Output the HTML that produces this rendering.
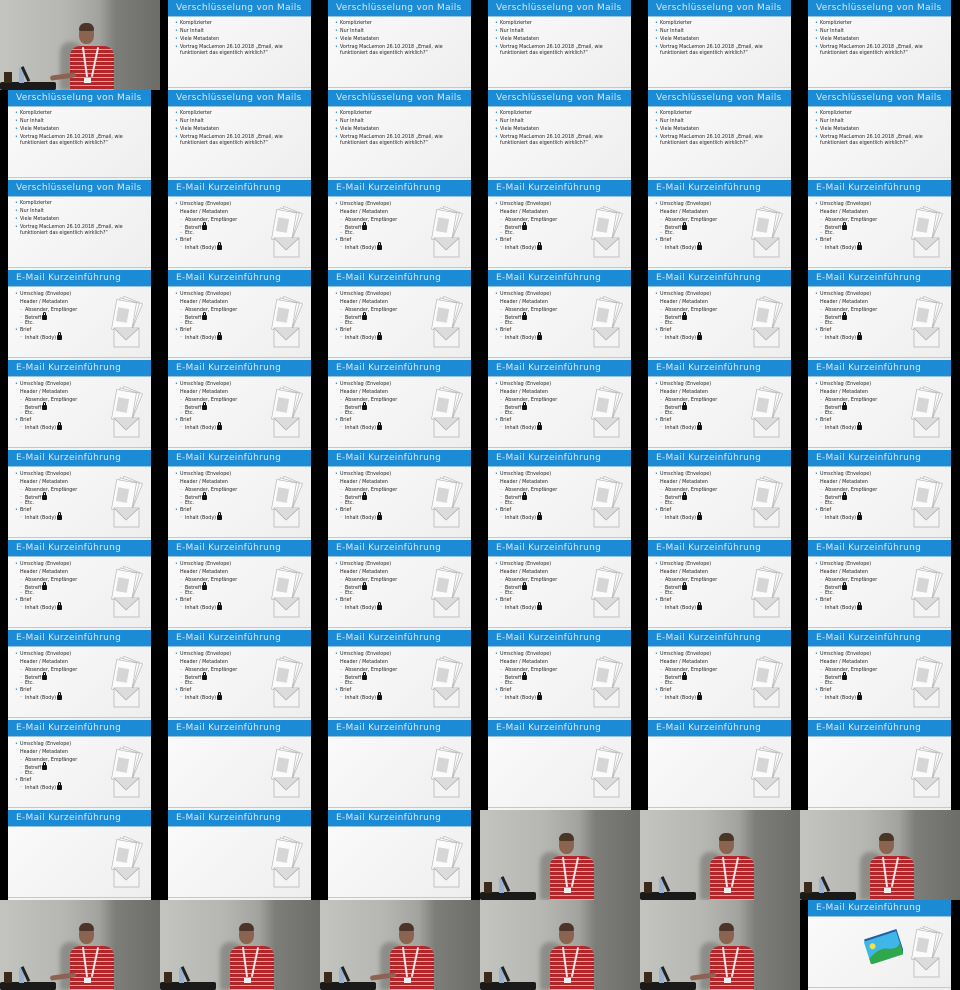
<!DOCTYPE html>
<html><head><meta charset="utf-8">
<style>
*{margin:0;padding:0;box-sizing:border-box}
body{width:960px;height:990px;background:#000;overflow:hidden;font-family:"DejaVu Sans","Liberation Sans",sans-serif}
#g{display:grid;grid-template-columns:repeat(6,160px);grid-auto-rows:90px;width:960px}
.t{position:relative;width:160px;height:90px;overflow:hidden;background:#000}
.s{position:absolute;left:8px;top:0;width:143px;height:90px;background:linear-gradient(135deg,#fbfbfb,#eeeeee)}
.s::after{content:"";position:absolute;left:0;right:0;bottom:2px;height:1px;background:#c8c8c8}
.h{position:absolute;left:0;top:0;width:143px;height:17px;background:#1c8bd6;border-bottom:1px solid #9ac3e0;color:#d5e9f7;font-size:9px;line-height:17px;padding-left:8px;white-space:nowrap;letter-spacing:0.3px}
.l{position:absolute;font-size:4.8px;color:#222;white-space:nowrap;line-height:6px;height:6px}
.b::before{content:"•";color:#1c8bd6;position:absolute;left:-5px}
.d::before{content:"–";color:#999;position:absolute;left:-5px}
.lk{display:inline-block;width:5px;height:5px;background:#111;border-radius:1px;position:relative;vertical-align:-1px;margin-left:1px}
.lk::before{content:"";position:absolute;left:1px;top:-3px;width:3px;height:4px;border:1px solid #111;border-bottom:none;border-radius:2px 2px 0 0;box-sizing:border-box}
.ic{position:absolute;left:96px;top:24px;width:40px;height:56px}
.p{position:absolute;inset:0;background:linear-gradient(90deg,#c3c3bf 0%,#b6b6b2 40%,#a2a29e 62%,#7d7d79 72%,#6c6c68 100%)}
.sh{position:absolute;left:60px;top:42px;width:22px;height:48px;background:#8c8c88;border-radius:10px 10px 0 0;filter:blur(2px)}
.hd{position:absolute;left:79px;top:25px;width:15px;height:19px;background:#8a6450;border-radius:45%}
.hr{position:absolute;left:79px;top:23px;width:15px;height:8px;background:#4a3526;border-radius:8px 8px 2px 2px}
.sr{position:absolute;left:70px;top:46px;width:44px;height:46px;background:repeating-linear-gradient(180deg,#b3272b 0 3px,#d8a8a8 3px 4px);border-radius:10px 10px 0 0}
.ly{position:absolute;left:84px;top:47px;width:2px;height:30px;background:#e8e8e8;transform:rotate(-8deg)}
.ly2{position:absolute;left:94px;top:47px;width:2px;height:30px;background:#e8e8e8;transform:rotate(12deg)}
.bd{position:absolute;left:84px;top:78px;width:7px;height:5px;background:#eee}
.dk{position:absolute;left:0;top:82px;width:56px;height:8px;background:#1a1a1a;border-radius:2px}
.bo{position:absolute;left:19px;top:68px;width:5px;height:15px;background:#9ab0d0}
.ob{position:absolute;left:4px;top:72px;width:8px;height:11px;background:#3a2a1a}
.lp{position:absolute;left:24px;top:66px;width:3px;height:16px;background:#222;transform:rotate(-25deg)}
.arm{position:absolute;left:50px;top:74px;width:26px;height:5px;background:#8a6450;border-radius:3px;transform:rotate(-8deg)}
</style></head><body>
<svg width="0" height="0" style="position:absolute"><defs><symbol id="env" viewBox="0 0 40 56"><g fill="#fbfbfb" stroke="#b8b8b8" stroke-width=".7"><rect x="14" y="5" width="20" height="28" transform="rotate(22 24 19)"/><rect x="12" y="6" width="20" height="28" transform="rotate(16 22 20)"/><rect x="10" y="7" width="20" height="30" transform="rotate(10 20 22)"/></g><rect x="13" y="14" width="11" height="14" fill="#d6d6d6" transform="rotate(10 18 21)"/><path d="M10 34 L35 34 L35 53 L10 53 Z" fill="#f4f4f4" stroke="#b0b0b0" stroke-width=".7"/><path d="M10 34 L22 46 L35 34" fill="#dcdcdc" stroke="#a8a8a8" stroke-width=".7"/></symbol></defs></svg>
<div id="g">
<!-- row 0 -->
<div class="t"><div class="p"></div><div class="sh"></div><div class="sr"></div><div class="ly"></div><div class="ly2"></div><div class="bd"></div><div class="hd"></div><div class="hr"></div><div class="arm"></div><div class="dk"></div><div class="ob"></div><div class="bo"></div><div class="lp"></div></div>
<div class="t"><div class="s"><div class="h">Verschlüsselung von Mails</div><div class="l b" style="left:12px;top:21px">Komplizierter</div><div class="l b" style="left:12px;top:29px">Nur Inhalt</div><div class="l b" style="left:12px;top:37px">Viele Metadaten</div><div class="l b" style="left:12px;top:45px;height:12px">Vortrag MacLemon 26.10.2018 „Email, wie<br>funktioniert das eigentlich wirklich?“</div></div></div>
<div class="t"><div class="s"><div class="h">Verschlüsselung von Mails</div><div class="l b" style="left:12px;top:21px">Komplizierter</div><div class="l b" style="left:12px;top:29px">Nur Inhalt</div><div class="l b" style="left:12px;top:37px">Viele Metadaten</div><div class="l b" style="left:12px;top:45px;height:12px">Vortrag MacLemon 26.10.2018 „Email, wie<br>funktioniert das eigentlich wirklich?“</div></div></div>
<div class="t"><div class="s"><div class="h">Verschlüsselung von Mails</div><div class="l b" style="left:12px;top:21px">Komplizierter</div><div class="l b" style="left:12px;top:29px">Nur Inhalt</div><div class="l b" style="left:12px;top:37px">Viele Metadaten</div><div class="l b" style="left:12px;top:45px;height:12px">Vortrag MacLemon 26.10.2018 „Email, wie<br>funktioniert das eigentlich wirklich?“</div></div></div>
<div class="t"><div class="s"><div class="h">Verschlüsselung von Mails</div><div class="l b" style="left:12px;top:21px">Komplizierter</div><div class="l b" style="left:12px;top:29px">Nur Inhalt</div><div class="l b" style="left:12px;top:37px">Viele Metadaten</div><div class="l b" style="left:12px;top:45px;height:12px">Vortrag MacLemon 26.10.2018 „Email, wie<br>funktioniert das eigentlich wirklich?“</div></div></div>
<div class="t"><div class="s"><div class="h">Verschlüsselung von Mails</div><div class="l b" style="left:12px;top:21px">Komplizierter</div><div class="l b" style="left:12px;top:29px">Nur Inhalt</div><div class="l b" style="left:12px;top:37px">Viele Metadaten</div><div class="l b" style="left:12px;top:45px;height:12px">Vortrag MacLemon 26.10.2018 „Email, wie<br>funktioniert das eigentlich wirklich?“</div></div></div>
<!-- row 1 -->
<div class="t"><div class="s"><div class="h">Verschlüsselung von Mails</div><div class="l b" style="left:12px;top:21px">Komplizierter</div><div class="l b" style="left:12px;top:29px">Nur Inhalt</div><div class="l b" style="left:12px;top:37px">Viele Metadaten</div><div class="l b" style="left:12px;top:45px;height:12px">Vortrag MacLemon 26.10.2018 „Email, wie<br>funktioniert das eigentlich wirklich?“</div></div></div>
<div class="t"><div class="s"><div class="h">Verschlüsselung von Mails</div><div class="l b" style="left:12px;top:21px">Komplizierter</div><div class="l b" style="left:12px;top:29px">Nur Inhalt</div><div class="l b" style="left:12px;top:37px">Viele Metadaten</div><div class="l b" style="left:12px;top:45px;height:12px">Vortrag MacLemon 26.10.2018 „Email, wie<br>funktioniert das eigentlich wirklich?“</div></div></div>
<div class="t"><div class="s"><div class="h">Verschlüsselung von Mails</div><div class="l b" style="left:12px;top:21px">Komplizierter</div><div class="l b" style="left:12px;top:29px">Nur Inhalt</div><div class="l b" style="left:12px;top:37px">Viele Metadaten</div><div class="l b" style="left:12px;top:45px;height:12px">Vortrag MacLemon 26.10.2018 „Email, wie<br>funktioniert das eigentlich wirklich?“</div></div></div>
<div class="t"><div class="s"><div class="h">Verschlüsselung von Mails</div><div class="l b" style="left:12px;top:21px">Komplizierter</div><div class="l b" style="left:12px;top:29px">Nur Inhalt</div><div class="l b" style="left:12px;top:37px">Viele Metadaten</div><div class="l b" style="left:12px;top:45px;height:12px">Vortrag MacLemon 26.10.2018 „Email, wie<br>funktioniert das eigentlich wirklich?“</div></div></div>
<div class="t"><div class="s"><div class="h">Verschlüsselung von Mails</div><div class="l b" style="left:12px;top:21px">Komplizierter</div><div class="l b" style="left:12px;top:29px">Nur Inhalt</div><div class="l b" style="left:12px;top:37px">Viele Metadaten</div><div class="l b" style="left:12px;top:45px;height:12px">Vortrag MacLemon 26.10.2018 „Email, wie<br>funktioniert das eigentlich wirklich?“</div></div></div>
<div class="t"><div class="s"><div class="h">Verschlüsselung von Mails</div><div class="l b" style="left:12px;top:21px">Komplizierter</div><div class="l b" style="left:12px;top:29px">Nur Inhalt</div><div class="l b" style="left:12px;top:37px">Viele Metadaten</div><div class="l b" style="left:12px;top:45px;height:12px">Vortrag MacLemon 26.10.2018 „Email, wie<br>funktioniert das eigentlich wirklich?“</div></div></div>
<!-- row 2 -->
<div class="t"><div class="s"><div class="h">Verschlüsselung von Mails</div><div class="l b" style="left:12px;top:21px">Komplizierter</div><div class="l b" style="left:12px;top:29px">Nur Inhalt</div><div class="l b" style="left:12px;top:37px">Viele Metadaten</div><div class="l b" style="left:12px;top:45px;height:12px">Vortrag MacLemon 26.10.2018 „Email, wie<br>funktioniert das eigentlich wirklich?“</div></div></div>
<div class="t"><div class="s"><div class="h">E-Mail Kurzeinführung</div><div class="l b" style="left:12px;top:22px">Umschlag (Envelope)</div><div class="l" style="left:12px;top:30px">Header / Metadaten</div><div class="l d" style="left:17px;top:38px">Absender, Empfänger</div><div class="l d" style="left:17px;top:45px">Betreff<span class="lk"></span></div><div class="l d" style="left:17px;top:51px">Etc.</div><div class="l b" style="left:12px;top:58px">Brief</div><div class="l d" style="left:17px;top:65px">Inhalt (Body)<span class="lk"></span></div><svg class="ic"><use href="#env"/></svg></div></div>
<div class="t"><div class="s"><div class="h">E-Mail Kurzeinführung</div><div class="l b" style="left:12px;top:22px">Umschlag (Envelope)</div><div class="l" style="left:12px;top:30px">Header / Metadaten</div><div class="l d" style="left:17px;top:38px">Absender, Empfänger</div><div class="l d" style="left:17px;top:45px">Betreff<span class="lk"></span></div><div class="l d" style="left:17px;top:51px">Etc.</div><div class="l b" style="left:12px;top:58px">Brief</div><div class="l d" style="left:17px;top:65px">Inhalt (Body)<span class="lk"></span></div><svg class="ic"><use href="#env"/></svg></div></div>
<div class="t"><div class="s"><div class="h">E-Mail Kurzeinführung</div><div class="l b" style="left:12px;top:22px">Umschlag (Envelope)</div><div class="l" style="left:12px;top:30px">Header / Metadaten</div><div class="l d" style="left:17px;top:38px">Absender, Empfänger</div><div class="l d" style="left:17px;top:45px">Betreff<span class="lk"></span></div><div class="l d" style="left:17px;top:51px">Etc.</div><div class="l b" style="left:12px;top:58px">Brief</div><div class="l d" style="left:17px;top:65px">Inhalt (Body)<span class="lk"></span></div><svg class="ic"><use href="#env"/></svg></div></div>
<div class="t"><div class="s"><div class="h">E-Mail Kurzeinführung</div><div class="l b" style="left:12px;top:22px">Umschlag (Envelope)</div><div class="l" style="left:12px;top:30px">Header / Metadaten</div><div class="l d" style="left:17px;top:38px">Absender, Empfänger</div><div class="l d" style="left:17px;top:45px">Betreff<span class="lk"></span></div><div class="l d" style="left:17px;top:51px">Etc.</div><div class="l b" style="left:12px;top:58px">Brief</div><div class="l d" style="left:17px;top:65px">Inhalt (Body)<span class="lk"></span></div><svg class="ic"><use href="#env"/></svg></div></div>
<div class="t"><div class="s"><div class="h">E-Mail Kurzeinführung</div><div class="l b" style="left:12px;top:22px">Umschlag (Envelope)</div><div class="l" style="left:12px;top:30px">Header / Metadaten</div><div class="l d" style="left:17px;top:38px">Absender, Empfänger</div><div class="l d" style="left:17px;top:45px">Betreff<span class="lk"></span></div><div class="l d" style="left:17px;top:51px">Etc.</div><div class="l b" style="left:12px;top:58px">Brief</div><div class="l d" style="left:17px;top:65px">Inhalt (Body)<span class="lk"></span></div><svg class="ic"><use href="#env"/></svg></div></div>
<!-- rows 3-7 (30) + row 8 col 0 : 31 full E slides -->
<div class="t"><div class="s"><div class="h">E-Mail Kurzeinführung</div><div class="l b" style="left:12px;top:22px">Umschlag (Envelope)</div><div class="l" style="left:12px;top:30px">Header / Metadaten</div><div class="l d" style="left:17px;top:38px">Absender, Empfänger</div><div class="l d" style="left:17px;top:45px">Betreff<span class="lk"></span></div><div class="l d" style="left:17px;top:51px">Etc.</div><div class="l b" style="left:12px;top:58px">Brief</div><div class="l d" style="left:17px;top:65px">Inhalt (Body)<span class="lk"></span></div><svg class="ic"><use href="#env"/></svg></div></div>
<div class="t"><div class="s"><div class="h">E-Mail Kurzeinführung</div><div class="l b" style="left:12px;top:22px">Umschlag (Envelope)</div><div class="l" style="left:12px;top:30px">Header / Metadaten</div><div class="l d" style="left:17px;top:38px">Absender, Empfänger</div><div class="l d" style="left:17px;top:45px">Betreff<span class="lk"></span></div><div class="l d" style="left:17px;top:51px">Etc.</div><div class="l b" style="left:12px;top:58px">Brief</div><div class="l d" style="left:17px;top:65px">Inhalt (Body)<span class="lk"></span></div><svg class="ic"><use href="#env"/></svg></div></div>
<div class="t"><div class="s"><div class="h">E-Mail Kurzeinführung</div><div class="l b" style="left:12px;top:22px">Umschlag (Envelope)</div><div class="l" style="left:12px;top:30px">Header / Metadaten</div><div class="l d" style="left:17px;top:38px">Absender, Empfänger</div><div class="l d" style="left:17px;top:45px">Betreff<span class="lk"></span></div><div class="l d" style="left:17px;top:51px">Etc.</div><div class="l b" style="left:12px;top:58px">Brief</div><div class="l d" style="left:17px;top:65px">Inhalt (Body)<span class="lk"></span></div><svg class="ic"><use href="#env"/></svg></div></div>
<div class="t"><div class="s"><div class="h">E-Mail Kurzeinführung</div><div class="l b" style="left:12px;top:22px">Umschlag (Envelope)</div><div class="l" style="left:12px;top:30px">Header / Metadaten</div><div class="l d" style="left:17px;top:38px">Absender, Empfänger</div><div class="l d" style="left:17px;top:45px">Betreff<span class="lk"></span></div><div class="l d" style="left:17px;top:51px">Etc.</div><div class="l b" style="left:12px;top:58px">Brief</div><div class="l d" style="left:17px;top:65px">Inhalt (Body)<span class="lk"></span></div><svg class="ic"><use href="#env"/></svg></div></div>
<div class="t"><div class="s"><div class="h">E-Mail Kurzeinführung</div><div class="l b" style="left:12px;top:22px">Umschlag (Envelope)</div><div class="l" style="left:12px;top:30px">Header / Metadaten</div><div class="l d" style="left:17px;top:38px">Absender, Empfänger</div><div class="l d" style="left:17px;top:45px">Betreff<span class="lk"></span></div><div class="l d" style="left:17px;top:51px">Etc.</div><div class="l b" style="left:12px;top:58px">Brief</div><div class="l d" style="left:17px;top:65px">Inhalt (Body)<span class="lk"></span></div><svg class="ic"><use href="#env"/></svg></div></div>
<div class="t"><div class="s"><div class="h">E-Mail Kurzeinführung</div><div class="l b" style="left:12px;top:22px">Umschlag (Envelope)</div><div class="l" style="left:12px;top:30px">Header / Metadaten</div><div class="l d" style="left:17px;top:38px">Absender, Empfänger</div><div class="l d" style="left:17px;top:45px">Betreff<span class="lk"></span></div><div class="l d" style="left:17px;top:51px">Etc.</div><div class="l b" style="left:12px;top:58px">Brief</div><div class="l d" style="left:17px;top:65px">Inhalt (Body)<span class="lk"></span></div><svg class="ic"><use href="#env"/></svg></div></div>
<div class="t"><div class="s"><div class="h">E-Mail Kurzeinführung</div><div class="l b" style="left:12px;top:22px">Umschlag (Envelope)</div><div class="l" style="left:12px;top:30px">Header / Metadaten</div><div class="l d" style="left:17px;top:38px">Absender, Empfänger</div><div class="l d" style="left:17px;top:45px">Betreff<span class="lk"></span></div><div class="l d" style="left:17px;top:51px">Etc.</div><div class="l b" style="left:12px;top:58px">Brief</div><div class="l d" style="left:17px;top:65px">Inhalt (Body)<span class="lk"></span></div><svg class="ic"><use href="#env"/></svg></div></div>
<div class="t"><div class="s"><div class="h">E-Mail Kurzeinführung</div><div class="l b" style="left:12px;top:22px">Umschlag (Envelope)</div><div class="l" style="left:12px;top:30px">Header / Metadaten</div><div class="l d" style="left:17px;top:38px">Absender, Empfänger</div><div class="l d" style="left:17px;top:45px">Betreff<span class="lk"></span></div><div class="l d" style="left:17px;top:51px">Etc.</div><div class="l b" style="left:12px;top:58px">Brief</div><div class="l d" style="left:17px;top:65px">Inhalt (Body)<span class="lk"></span></div><svg class="ic"><use href="#env"/></svg></div></div>
<div class="t"><div class="s"><div class="h">E-Mail Kurzeinführung</div><div class="l b" style="left:12px;top:22px">Umschlag (Envelope)</div><div class="l" style="left:12px;top:30px">Header / Metadaten</div><div class="l d" style="left:17px;top:38px">Absender, Empfänger</div><div class="l d" style="left:17px;top:45px">Betreff<span class="lk"></span></div><div class="l d" style="left:17px;top:51px">Etc.</div><div class="l b" style="left:12px;top:58px">Brief</div><div class="l d" style="left:17px;top:65px">Inhalt (Body)<span class="lk"></span></div><svg class="ic"><use href="#env"/></svg></div></div>
<div class="t"><div class="s"><div class="h">E-Mail Kurzeinführung</div><div class="l b" style="left:12px;top:22px">Umschlag (Envelope)</div><div class="l" style="left:12px;top:30px">Header / Metadaten</div><div class="l d" style="left:17px;top:38px">Absender, Empfänger</div><div class="l d" style="left:17px;top:45px">Betreff<span class="lk"></span></div><div class="l d" style="left:17px;top:51px">Etc.</div><div class="l b" style="left:12px;top:58px">Brief</div><div class="l d" style="left:17px;top:65px">Inhalt (Body)<span class="lk"></span></div><svg class="ic"><use href="#env"/></svg></div></div>
<div class="t"><div class="s"><div class="h">E-Mail Kurzeinführung</div><div class="l b" style="left:12px;top:22px">Umschlag (Envelope)</div><div class="l" style="left:12px;top:30px">Header / Metadaten</div><div class="l d" style="left:17px;top:38px">Absender, Empfänger</div><div class="l d" style="left:17px;top:45px">Betreff<span class="lk"></span></div><div class="l d" style="left:17px;top:51px">Etc.</div><div class="l b" style="left:12px;top:58px">Brief</div><div class="l d" style="left:17px;top:65px">Inhalt (Body)<span class="lk"></span></div><svg class="ic"><use href="#env"/></svg></div></div>
<div class="t"><div class="s"><div class="h">E-Mail Kurzeinführung</div><div class="l b" style="left:12px;top:22px">Umschlag (Envelope)</div><div class="l" style="left:12px;top:30px">Header / Metadaten</div><div class="l d" style="left:17px;top:38px">Absender, Empfänger</div><div class="l d" style="left:17px;top:45px">Betreff<span class="lk"></span></div><div class="l d" style="left:17px;top:51px">Etc.</div><div class="l b" style="left:12px;top:58px">Brief</div><div class="l d" style="left:17px;top:65px">Inhalt (Body)<span class="lk"></span></div><svg class="ic"><use href="#env"/></svg></div></div>
<div class="t"><div class="s"><div class="h">E-Mail Kurzeinführung</div><div class="l b" style="left:12px;top:22px">Umschlag (Envelope)</div><div class="l" style="left:12px;top:30px">Header / Metadaten</div><div class="l d" style="left:17px;top:38px">Absender, Empfänger</div><div class="l d" style="left:17px;top:45px">Betreff<span class="lk"></span></div><div class="l d" style="left:17px;top:51px">Etc.</div><div class="l b" style="left:12px;top:58px">Brief</div><div class="l d" style="left:17px;top:65px">Inhalt (Body)<span class="lk"></span></div><svg class="ic"><use href="#env"/></svg></div></div>
<div class="t"><div class="s"><div class="h">E-Mail Kurzeinführung</div><div class="l b" style="left:12px;top:22px">Umschlag (Envelope)</div><div class="l" style="left:12px;top:30px">Header / Metadaten</div><div class="l d" style="left:17px;top:38px">Absender, Empfänger</div><div class="l d" style="left:17px;top:45px">Betreff<span class="lk"></span></div><div class="l d" style="left:17px;top:51px">Etc.</div><div class="l b" style="left:12px;top:58px">Brief</div><div class="l d" style="left:17px;top:65px">Inhalt (Body)<span class="lk"></span></div><svg class="ic"><use href="#env"/></svg></div></div>
<div class="t"><div class="s"><div class="h">E-Mail Kurzeinführung</div><div class="l b" style="left:12px;top:22px">Umschlag (Envelope)</div><div class="l" style="left:12px;top:30px">Header / Metadaten</div><div class="l d" style="left:17px;top:38px">Absender, Empfänger</div><div class="l d" style="left:17px;top:45px">Betreff<span class="lk"></span></div><div class="l d" style="left:17px;top:51px">Etc.</div><div class="l b" style="left:12px;top:58px">Brief</div><div class="l d" style="left:17px;top:65px">Inhalt (Body)<span class="lk"></span></div><svg class="ic"><use href="#env"/></svg></div></div>
<div class="t"><div class="s"><div class="h">E-Mail Kurzeinführung</div><div class="l b" style="left:12px;top:22px">Umschlag (Envelope)</div><div class="l" style="left:12px;top:30px">Header / Metadaten</div><div class="l d" style="left:17px;top:38px">Absender, Empfänger</div><div class="l d" style="left:17px;top:45px">Betreff<span class="lk"></span></div><div class="l d" style="left:17px;top:51px">Etc.</div><div class="l b" style="left:12px;top:58px">Brief</div><div class="l d" style="left:17px;top:65px">Inhalt (Body)<span class="lk"></span></div><svg class="ic"><use href="#env"/></svg></div></div>
<div class="t"><div class="s"><div class="h">E-Mail Kurzeinführung</div><div class="l b" style="left:12px;top:22px">Umschlag (Envelope)</div><div class="l" style="left:12px;top:30px">Header / Metadaten</div><div class="l d" style="left:17px;top:38px">Absender, Empfänger</div><div class="l d" style="left:17px;top:45px">Betreff<span class="lk"></span></div><div class="l d" style="left:17px;top:51px">Etc.</div><div class="l b" style="left:12px;top:58px">Brief</div><div class="l d" style="left:17px;top:65px">Inhalt (Body)<span class="lk"></span></div><svg class="ic"><use href="#env"/></svg></div></div>
<div class="t"><div class="s"><div class="h">E-Mail Kurzeinführung</div><div class="l b" style="left:12px;top:22px">Umschlag (Envelope)</div><div class="l" style="left:12px;top:30px">Header / Metadaten</div><div class="l d" style="left:17px;top:38px">Absender, Empfänger</div><div class="l d" style="left:17px;top:45px">Betreff<span class="lk"></span></div><div class="l d" style="left:17px;top:51px">Etc.</div><div class="l b" style="left:12px;top:58px">Brief</div><div class="l d" style="left:17px;top:65px">Inhalt (Body)<span class="lk"></span></div><svg class="ic"><use href="#env"/></svg></div></div>
<div class="t"><div class="s"><div class="h">E-Mail Kurzeinführung</div><div class="l b" style="left:12px;top:22px">Umschlag (Envelope)</div><div class="l" style="left:12px;top:30px">Header / Metadaten</div><div class="l d" style="left:17px;top:38px">Absender, Empfänger</div><div class="l d" style="left:17px;top:45px">Betreff<span class="lk"></span></div><div class="l d" style="left:17px;top:51px">Etc.</div><div class="l b" style="left:12px;top:58px">Brief</div><div class="l d" style="left:17px;top:65px">Inhalt (Body)<span class="lk"></span></div><svg class="ic"><use href="#env"/></svg></div></div>
<div class="t"><div class="s"><div class="h">E-Mail Kurzeinführung</div><div class="l b" style="left:12px;top:22px">Umschlag (Envelope)</div><div class="l" style="left:12px;top:30px">Header / Metadaten</div><div class="l d" style="left:17px;top:38px">Absender, Empfänger</div><div class="l d" style="left:17px;top:45px">Betreff<span class="lk"></span></div><div class="l d" style="left:17px;top:51px">Etc.</div><div class="l b" style="left:12px;top:58px">Brief</div><div class="l d" style="left:17px;top:65px">Inhalt (Body)<span class="lk"></span></div><svg class="ic"><use href="#env"/></svg></div></div>
<div class="t"><div class="s"><div class="h">E-Mail Kurzeinführung</div><div class="l b" style="left:12px;top:22px">Umschlag (Envelope)</div><div class="l" style="left:12px;top:30px">Header / Metadaten</div><div class="l d" style="left:17px;top:38px">Absender, Empfänger</div><div class="l d" style="left:17px;top:45px">Betreff<span class="lk"></span></div><div class="l d" style="left:17px;top:51px">Etc.</div><div class="l b" style="left:12px;top:58px">Brief</div><div class="l d" style="left:17px;top:65px">Inhalt (Body)<span class="lk"></span></div><svg class="ic"><use href="#env"/></svg></div></div>
<div class="t"><div class="s"><div class="h">E-Mail Kurzeinführung</div><div class="l b" style="left:12px;top:22px">Umschlag (Envelope)</div><div class="l" style="left:12px;top:30px">Header / Metadaten</div><div class="l d" style="left:17px;top:38px">Absender, Empfänger</div><div class="l d" style="left:17px;top:45px">Betreff<span class="lk"></span></div><div class="l d" style="left:17px;top:51px">Etc.</div><div class="l b" style="left:12px;top:58px">Brief</div><div class="l d" style="left:17px;top:65px">Inhalt (Body)<span class="lk"></span></div><svg class="ic"><use href="#env"/></svg></div></div>
<div class="t"><div class="s"><div class="h">E-Mail Kurzeinführung</div><div class="l b" style="left:12px;top:22px">Umschlag (Envelope)</div><div class="l" style="left:12px;top:30px">Header / Metadaten</div><div class="l d" style="left:17px;top:38px">Absender, Empfänger</div><div class="l d" style="left:17px;top:45px">Betreff<span class="lk"></span></div><div class="l d" style="left:17px;top:51px">Etc.</div><div class="l b" style="left:12px;top:58px">Brief</div><div class="l d" style="left:17px;top:65px">Inhalt (Body)<span class="lk"></span></div><svg class="ic"><use href="#env"/></svg></div></div>
<div class="t"><div class="s"><div class="h">E-Mail Kurzeinführung</div><div class="l b" style="left:12px;top:22px">Umschlag (Envelope)</div><div class="l" style="left:12px;top:30px">Header / Metadaten</div><div class="l d" style="left:17px;top:38px">Absender, Empfänger</div><div class="l d" style="left:17px;top:45px">Betreff<span class="lk"></span></div><div class="l d" style="left:17px;top:51px">Etc.</div><div class="l b" style="left:12px;top:58px">Brief</div><div class="l d" style="left:17px;top:65px">Inhalt (Body)<span class="lk"></span></div><svg class="ic"><use href="#env"/></svg></div></div>
<div class="t"><div class="s"><div class="h">E-Mail Kurzeinführung</div><div class="l b" style="left:12px;top:22px">Umschlag (Envelope)</div><div class="l" style="left:12px;top:30px">Header / Metadaten</div><div class="l d" style="left:17px;top:38px">Absender, Empfänger</div><div class="l d" style="left:17px;top:45px">Betreff<span class="lk"></span></div><div class="l d" style="left:17px;top:51px">Etc.</div><div class="l b" style="left:12px;top:58px">Brief</div><div class="l d" style="left:17px;top:65px">Inhalt (Body)<span class="lk"></span></div><svg class="ic"><use href="#env"/></svg></div></div>
<div class="t"><div class="s"><div class="h">E-Mail Kurzeinführung</div><div class="l b" style="left:12px;top:22px">Umschlag (Envelope)</div><div class="l" style="left:12px;top:30px">Header / Metadaten</div><div class="l d" style="left:17px;top:38px">Absender, Empfänger</div><div class="l d" style="left:17px;top:45px">Betreff<span class="lk"></span></div><div class="l d" style="left:17px;top:51px">Etc.</div><div class="l b" style="left:12px;top:58px">Brief</div><div class="l d" style="left:17px;top:65px">Inhalt (Body)<span class="lk"></span></div><svg class="ic"><use href="#env"/></svg></div></div>
<div class="t"><div class="s"><div class="h">E-Mail Kurzeinführung</div><div class="l b" style="left:12px;top:22px">Umschlag (Envelope)</div><div class="l" style="left:12px;top:30px">Header / Metadaten</div><div class="l d" style="left:17px;top:38px">Absender, Empfänger</div><div class="l d" style="left:17px;top:45px">Betreff<span class="lk"></span></div><div class="l d" style="left:17px;top:51px">Etc.</div><div class="l b" style="left:12px;top:58px">Brief</div><div class="l d" style="left:17px;top:65px">Inhalt (Body)<span class="lk"></span></div><svg class="ic"><use href="#env"/></svg></div></div>
<div class="t"><div class="s"><div class="h">E-Mail Kurzeinführung</div><div class="l b" style="left:12px;top:22px">Umschlag (Envelope)</div><div class="l" style="left:12px;top:30px">Header / Metadaten</div><div class="l d" style="left:17px;top:38px">Absender, Empfänger</div><div class="l d" style="left:17px;top:45px">Betreff<span class="lk"></span></div><div class="l d" style="left:17px;top:51px">Etc.</div><div class="l b" style="left:12px;top:58px">Brief</div><div class="l d" style="left:17px;top:65px">Inhalt (Body)<span class="lk"></span></div><svg class="ic"><use href="#env"/></svg></div></div>
<div class="t"><div class="s"><div class="h">E-Mail Kurzeinführung</div><div class="l b" style="left:12px;top:22px">Umschlag (Envelope)</div><div class="l" style="left:12px;top:30px">Header / Metadaten</div><div class="l d" style="left:17px;top:38px">Absender, Empfänger</div><div class="l d" style="left:17px;top:45px">Betreff<span class="lk"></span></div><div class="l d" style="left:17px;top:51px">Etc.</div><div class="l b" style="left:12px;top:58px">Brief</div><div class="l d" style="left:17px;top:65px">Inhalt (Body)<span class="lk"></span></div><svg class="ic"><use href="#env"/></svg></div></div>
<div class="t"><div class="s"><div class="h">E-Mail Kurzeinführung</div><div class="l b" style="left:12px;top:22px">Umschlag (Envelope)</div><div class="l" style="left:12px;top:30px">Header / Metadaten</div><div class="l d" style="left:17px;top:38px">Absender, Empfänger</div><div class="l d" style="left:17px;top:45px">Betreff<span class="lk"></span></div><div class="l d" style="left:17px;top:51px">Etc.</div><div class="l b" style="left:12px;top:58px">Brief</div><div class="l d" style="left:17px;top:65px">Inhalt (Body)<span class="lk"></span></div><svg class="ic"><use href="#env"/></svg></div></div>
<div class="t"><div class="s"><div class="h">E-Mail Kurzeinführung</div><div class="l b" style="left:12px;top:22px">Umschlag (Envelope)</div><div class="l" style="left:12px;top:30px">Header / Metadaten</div><div class="l d" style="left:17px;top:38px">Absender, Empfänger</div><div class="l d" style="left:17px;top:45px">Betreff<span class="lk"></span></div><div class="l d" style="left:17px;top:51px">Etc.</div><div class="l b" style="left:12px;top:58px">Brief</div><div class="l d" style="left:17px;top:65px">Inhalt (Body)<span class="lk"></span></div><svg class="ic"><use href="#env"/></svg></div></div>
<!-- row 8 cols1-5, row 9 cols 0-2: empty E slides -->
<div class="t"><div class="s"><div class="h">E-Mail Kurzeinführung</div><svg class="ic"><use href="#env"/></svg></div></div>
<div class="t"><div class="s"><div class="h">E-Mail Kurzeinführung</div><svg class="ic"><use href="#env"/></svg></div></div>
<div class="t"><div class="s"><div class="h">E-Mail Kurzeinführung</div><svg class="ic"><use href="#env"/></svg></div></div>
<div class="t"><div class="s"><div class="h">E-Mail Kurzeinführung</div><svg class="ic"><use href="#env"/></svg></div></div>
<div class="t"><div class="s"><div class="h">E-Mail Kurzeinführung</div><svg class="ic"><use href="#env"/></svg></div></div>
<div class="t"><div class="s"><div class="h">E-Mail Kurzeinführung</div><svg class="ic"><use href="#env"/></svg></div></div>
<div class="t"><div class="s"><div class="h">E-Mail Kurzeinführung</div><svg class="ic"><use href="#env"/></svg></div></div>
<div class="t"><div class="s"><div class="h">E-Mail Kurzeinführung</div><svg class="ic"><use href="#env"/></svg></div></div>
<!-- row 9 cols 3-5 photos -->
<div class="t"><div class="p"></div><div class="sh"></div><div class="sr"></div><div class="ly"></div><div class="ly2"></div><div class="bd"></div><div class="hd"></div><div class="hr"></div><div class="dk"></div><div class="ob"></div><div class="bo"></div><div class="lp"></div></div>
<div class="t"><div class="p"></div><div class="sh"></div><div class="sr"></div><div class="ly"></div><div class="ly2"></div><div class="bd"></div><div class="hd"></div><div class="hr"></div><div class="dk"></div><div class="ob"></div><div class="bo"></div><div class="lp"></div></div>
<div class="t"><div class="p"></div><div class="sh"></div><div class="sr"></div><div class="ly"></div><div class="ly2"></div><div class="bd"></div><div class="hd"></div><div class="hr"></div><div class="dk"></div><div class="ob"></div><div class="bo"></div><div class="lp"></div></div>
<!-- row 10 -->
<div class="t"><div class="p"></div><div class="sh"></div><div class="sr"></div><div class="ly"></div><div class="ly2"></div><div class="bd"></div><div class="hd"></div><div class="hr"></div><div class="arm"></div><div class="dk"></div><div class="ob"></div><div class="bo"></div><div class="lp"></div></div>
<div class="t"><div class="p"></div><div class="sh"></div><div class="sr"></div><div class="ly"></div><div class="ly2"></div><div class="bd"></div><div class="hd"></div><div class="hr"></div><div class="dk"></div><div class="ob"></div><div class="bo"></div><div class="lp"></div></div>
<div class="t"><div class="p"></div><div class="sh"></div><div class="sr"></div><div class="ly"></div><div class="ly2"></div><div class="bd"></div><div class="hd"></div><div class="hr"></div><div class="arm"></div><div class="dk"></div><div class="ob"></div><div class="bo"></div><div class="lp"></div></div>
<div class="t"><div class="p"></div><div class="sh"></div><div class="sr"></div><div class="ly"></div><div class="ly2"></div><div class="bd"></div><div class="hd"></div><div class="hr"></div><div class="dk"></div><div class="ob"></div><div class="bo"></div><div class="lp"></div></div>
<div class="t"><div class="p"></div><div class="sh"></div><div class="sr"></div><div class="ly"></div><div class="ly2"></div><div class="bd"></div><div class="hd"></div><div class="hr"></div><div class="arm"></div><div class="dk"></div><div class="ob"></div><div class="bo"></div><div class="lp"></div></div>
<div class="t"><div class="s"><div class="h">E-Mail Kurzeinführung</div><svg class="ic"><use href="#env"/></svg><svg style="position:absolute;left:55px;top:28px" width="40" height="36" viewBox="0 0 40 36"><g transform="rotate(-18 20 18)"><rect x="4" y="6" width="34" height="24" fill="#1f5fa8"/><rect x="3" y="8" width="34" height="24" fill="#3fb6e8"/><path d="M3 26 Q15 18 24 22 T37 20 L37 32 L3 32 Z" fill="#2ea84a"/><circle cx="10" cy="15" r="3" fill="#f5e04a"/></g></svg></div></div>
</div>
</body></html>
